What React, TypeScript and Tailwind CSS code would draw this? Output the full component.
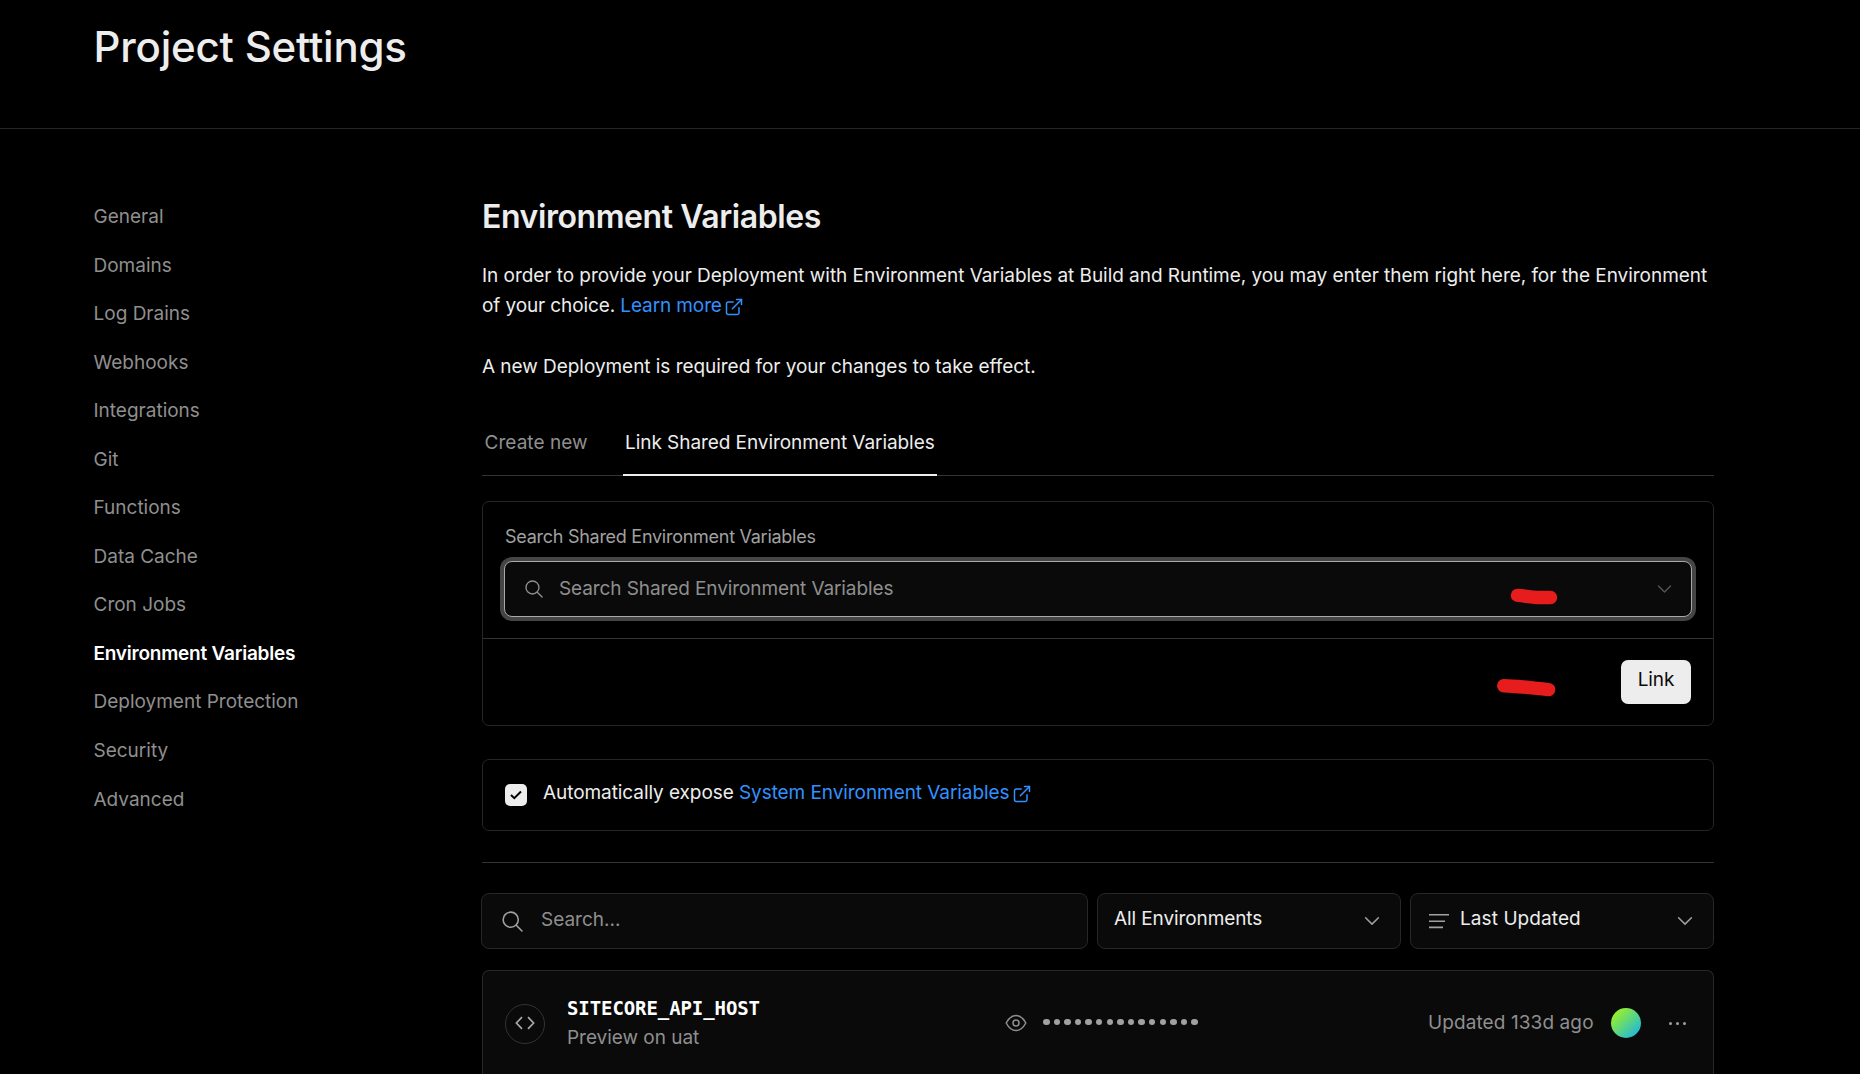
const navItems = [
  "General",
  "Domains",
  "Log Drains",
  "Webhooks",
  "Integrations",
  "Git",
  "Functions",
  "Data Cache",
  "Cron Jobs",
  "Environment Variables",
  "Deployment Protection",
  "Security",
  "Advanced",
];

function SearchIcon({ className }: { className: string }) {
  return (
    <svg viewBox="0 0 20 20" fill="none" stroke="currentColor" strokeWidth="1.5" strokeLinecap="round" className={className}>
      <circle cx="8.3" cy="8.3" r="7.2" />
      <path d="M13.6 13.6 19 19" />
    </svg>
  );
}

function ChevronIcon({ className }: { className: string }) {
  return (
    <svg viewBox="0 0 16 10" fill="none" stroke="currentColor" strokeWidth="1.5" strokeLinecap="round" strokeLinejoin="round" className={className}>
      <path d="M1.6 1.7 8 8.1l6.4-6.4" />
    </svg>
  );
}

function ExternalIcon() {
  return (
    <svg viewBox="0 0 24 24" fill="none" stroke="currentColor" strokeWidth="1.8" strokeLinecap="round" strokeLinejoin="round" className="ml-[2px] inline-block size-[20px] shrink-0 align-[-4.5px]">
      <path d="M18 13v6a2 2 0 0 1-2 2H5a2 2 0 0 1-2-2V8a2 2 0 0 1 2-2h6" />
      <path d="M15 3h6v6" />
      <path d="M10 14 21 3" />
    </svg>
  );
}

function Sidebar() {
  return (
    <nav className="flex w-[482px] shrink-0 flex-col pt-[64px] pl-[93.5px]">
      {navItems.map((item) => (
        <a
          key={item}
          className={
            item === "Environment Variables"
              ? "flex h-[48.55px] items-center font-semibold tracking-[-0.23px] text-white"
              : "flex h-[48.55px] items-center text-[#8f8f8f]"
          }
        >
          {item}
        </a>
      ))}
    </nav>
  );
}

function LinkCard() {
  return (
    <section className="relative mt-[25px] h-[225px] rounded-[7px] border border-[#252525]">
      <div className="px-[21px] pt-[21px] pb-[21px]">
        <label className="block pl-px text-[18px] leading-[27px] tracking-[-0.27px] text-[#a1a1a1]">
          Search Shared Environment Variables
        </label>
        <div className="mt-[11px] flex h-[56px] items-center rounded-[8px] border border-[#a8a8a8] bg-[#0a0a0a] pr-[19px] pl-5 text-[#8f8f8f] ring-4 ring-[#454545]">
          <SearchIcon className="mb-px size-[18px]" />
          <span className="ml-[16px] grow pt-px tracking-[-0.1px]">Search Shared Environment Variables</span>
          <ChevronIcon className="mb-px h-[10px] w-[15px] text-[#555]" />
        </div>
      </div>
      <div className="flex h-[87px] items-center justify-end border-t border-[#333] px-[22px]">
        <button className="h-[44px] w-[70px] rounded-[7px] bg-[#ededed] pb-[3px] tracking-[-0.1px] text-[#0a0a0a]">Link</button>
      </div>
      {/* hand-drawn marker strokes over the card */}
      <svg className="pointer-events-none absolute top-[80px] left-[1005px] h-[120px] w-[80px]" viewBox="0 0 80 120" fill="none" stroke="#e71d1d" strokeWidth="13.4" strokeLinecap="round" strokeLinejoin="round">
        <path d="M29.5 13.4C37 13.9 43 15.6 50 15.5L62.5 15.5" />
        <path d="M15.7 103.7C25 103.7 35 105 60.6 107.6" />
      </svg>
    </section>
  );
}

function Filters() {
  return (
    <div className="mt-[30px] -ml-px flex gap-[9px]">
      <div className="flex h-[56px] w-[607px] items-center rounded-[8px] border border-[#272727] bg-[#0a0a0a] pl-5 text-[#8f8f8f]">
        <SearchIcon className="size-[21px] text-[#a1a1a1]" />
        <span className="ml-[18px] pb-[2px]">Search...</span>
      </div>
      <div className="flex h-[56px] w-[304px] items-center rounded-[8px] border border-[#272727] bg-[#0a0a0a] pr-[20px] pl-4">
        <span className="grow pb-[4px] tracking-[-0.1px]">All Environments</span>
        <ChevronIcon className="h-[10px] w-[16px] text-[#a1a1a1]" />
      </div>
      <div className="flex h-[56px] w-[304px] items-center rounded-[8px] border border-[#272727] bg-[#0a0a0a] pr-[20px] pl-[18px]">
        <svg viewBox="0 0 20 16" className="h-[16px] w-[20px] text-[#a1a1a1]" fill="none" stroke="currentColor" strokeWidth="1.6">
          <path d="M0 1.7h20M0 8.2h16M0 14.4h14" />
        </svg>
        <span className="ml-[11px] grow pb-[4px] tracking-[0.08px]">Last Updated</span>
        <ChevronIcon className="h-[10px] w-[16px] text-[#a1a1a1]" />
      </div>
    </div>
  );
}

function VariableRow() {
  return (
    <div className="mt-[21px] flex h-[106px] shrink-0 items-center rounded-t-[7px] border border-b-0 border-[#272727] bg-[#0a0a0a] px-[22px] text-[#8f8f8f]">
      <div className="flex size-[40px] items-center justify-center rounded-full border border-[#333]">
        <svg viewBox="0 0 20 14" className="mb-px h-[14px] w-[20px]" fill="none" stroke="#a8a8a8" strokeWidth="1.7">
          <path d="M7 1.2 1.4 7 7 12.8M13 1.2 18.6 7 13 12.8" />
        </svg>
      </div>
      <div className="ml-[22px] flex w-[438px] flex-col pb-[2px]">
        <span className="font-['DejaVu_Sans_Mono','Liberation_Mono',monospace] leading-[29px] font-bold tracking-[-0.09px] text-white">
          SITECORE_API_HOST
        </span>
        <span className="leading-[29px] tracking-[-0.03px]">Preview on uat</span>
      </div>
      <svg viewBox="0 0 22 18" className="mb-px h-[18px] w-[22px] shrink-0" fill="none" stroke="#8f8f8f" strokeWidth="1.5">
        <path d="M1.2 9C4 3.7 7.3 1.5 11 1.5S18 3.7 20.8 9C18 14.3 14.7 16.5 11 16.5S4 14.3 1.2 9Z" strokeLinejoin="round" />
        <circle cx="11" cy="9" r="3" />
      </svg>
      <div className="ml-[16px] flex gap-[4.1px] pb-[3px]">
        {Array.from({ length: 15 }, (_, i) => (
          <span key={i} className="size-[6.5px] rounded-full bg-[#a1a1a1]" />
        ))}
      </div>
      <span className="ml-auto tracking-[0.1px]">Updated 133d ago</span>
      <span className="mb-px ml-[17px] size-[30px] rounded-full bg-linear-to-br/srgb from-[#b0fb05] to-[#0cb0f8]" />
      <span className="mr-[5px] ml-[28px] flex gap-[4.2px]">
        <span className="size-[3px] rounded-full bg-[#a1a1a1]" />
        <span className="size-[3px] rounded-full bg-[#a1a1a1]" />
        <span className="size-[3px] rounded-full bg-[#a1a1a1]" />
      </span>
    </div>
  );
}

export default function App() {
  return (
    <div className="h-[1074px] overflow-hidden bg-black font-['Inter','Liberation_Sans',sans-serif] text-[19px] text-[#ededed]">
      <header className="h-[129px] border-b border-[#262626] pt-[22px] pl-[93.5px]">
        <h1 className="text-[42px] leading-[50px] font-medium tracking-[-0.2px]">Project Settings</h1>
      </header>
      <div className="flex">
        <Sidebar />
        <main className="flex w-[1232px] flex-col pt-[68px]">
          <h2 className="h-[40px] text-[32px] leading-[40px] font-semibold tracking-[-0.42px]">Environment Variables</h2>
          <div className="mt-[24px] h-[121px] leading-[30.3px] tracking-[-0.043px]">
            <p className="whitespace-nowrap">
              In order to provide your Deployment with Environment Variables at Build and Runtime, you may enter them right here, for the Environment
              <br />
              <span className="tracking-[-0.11px]">
                of your choice.{" "}
                <a className="text-[#3291ff]">
                  Learn more
                  <ExternalIcon />
                </a>
              </span>
            </p>
            <p className="mt-[30.3px]">A new Deployment is required for your changes to take effect.</p>
          </div>
          <div className="mt-[30px] flex h-[64px] border-b border-[#333]">
            <a className="h-[64px] px-[2.5px] leading-[62px] tracking-[0.05px] text-[#8f8f8f]">Create new</a>
            <a className="ml-[33px] h-[64px] border-b-2 border-[#ededed] px-[2px] leading-[62px] tracking-[-0.07px]">
              Link Shared Environment Variables
            </a>
          </div>
          <LinkCard />
          <section className="mt-[33px] flex h-[72px] items-center rounded-[7px] border border-[#252525] px-[22px]">
            <span className="flex size-[22px] items-center justify-center rounded-[5px] bg-[#ededed]">
              <svg viewBox="0 0 12 10" className="h-[10px] w-[12px]" fill="none" stroke="#000" strokeWidth="2">
                <path d="M1 5 4.3 8.2 11 1.5" />
              </svg>
            </span>
            <span className="ml-[16px] pb-[4px] leading-[30px] tracking-[-0.07px]">
              Automatically expose{" "}
              <a className="text-[#3291ff]">
                System Environment Variables
                <ExternalIcon />
              </a>
            </span>
          </section>
          <div className="mt-[31px] h-px bg-[#333]" />
          <Filters />
          <VariableRow />
        </main>
      </div>
    </div>
  );
}
